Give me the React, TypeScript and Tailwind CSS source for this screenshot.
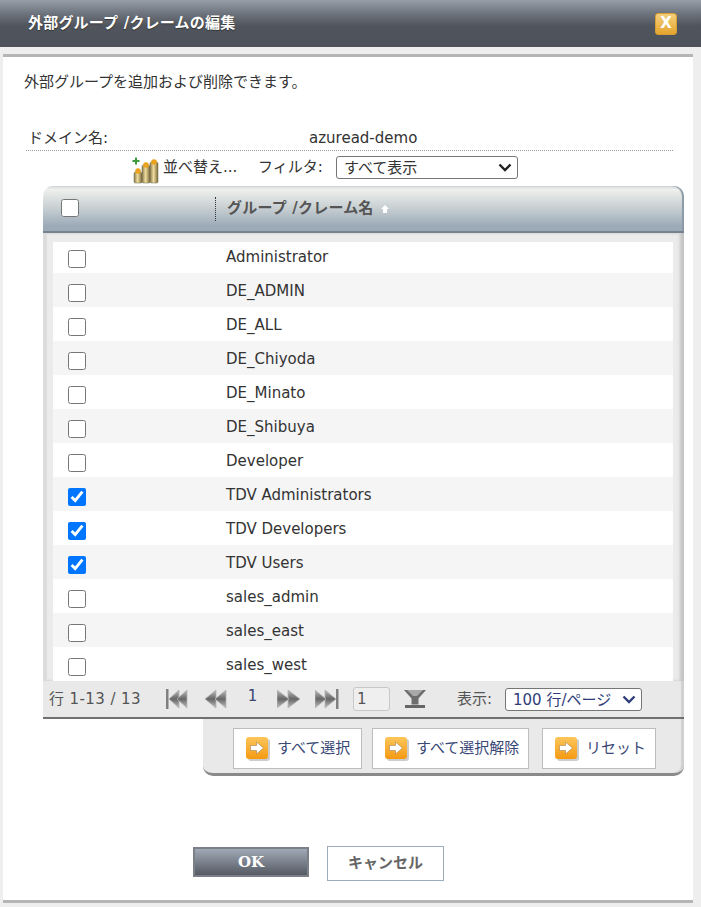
import React from 'react';

const FONT = "font-['DejaVu_Sans','Noto_Sans_CJK_JP',sans-serif]";

const rows = [
  { name: 'Administrator', on: false },
  { name: 'DE_ADMIN', on: false },
  { name: 'DE_ALL', on: false },
  { name: 'DE_Chiyoda', on: false },
  { name: 'DE_Minato', on: false },
  { name: 'DE_Shibuya', on: false },
  { name: 'Developer', on: false },
  { name: 'TDV Administrators', on: true },
  { name: 'TDV Developers', on: true },
  { name: 'TDV Users', on: true },
  { name: 'sales_admin', on: false },
  { name: 'sales_east', on: false },
  { name: 'sales_west', on: false },
];

const ArrowBadge = () => (
  <svg width="24" height="24" viewBox="0 0 24 24" className="shrink-0">
    <defs>
      <linearGradient id="ab" x1="0" y1="0" x2="0" y2="1">
        <stop offset="0" stopColor="#fcc65a" />
        <stop offset="1" stopColor="#f59a12" />
      </linearGradient>
    </defs>
    <rect x="2" y="2" width="22" height="22" rx="3" fill="#ccc" />
    <rect x="0" y="0" width="22" height="22" rx="3" fill="url(#ab)" />
    <path d="M4.5 8.5h6V5l7 6-7 6v-3.500h-6z" fill="#fff" stroke="#a8824a" strokeWidth="0.6" />
  </svg>
);

const PagerIcon = ({ d, bar }: { d: string[]; bar?: 'l' | 'r' }) => (
  <svg width="24" height="22" viewBox="0 0 24 22" className="shrink-0">
    <defs>
      <linearGradient id="pg" x1="0" y1="0" x2="0" y2="1">
        <stop offset="0" stopColor="#bcbcbc" />
        <stop offset="0.5" stopColor="#666" />
        <stop offset="1" stopColor="#c0c0c0" />
      </linearGradient>
    </defs>
    {d.map((p) => (
      <path key={p} d={p} fill="url(#pg)" stroke="#b4b4b4" strokeWidth="0.8" />
    ))}
    {bar === 'l' && <rect x="1" y="1" width="2.500" height="20" fill="#808080" />}
    {bar === 'r' && <rect x="21" y="1" width="2.500" height="20" fill="#808080" />}
  </svg>
);

const ActionButton = ({ label, width }: { label: string; width: string }) => (
  <button className={`${width} h-[41px] bg-white border border-[#bdbdbd] flex items-center pl-[12px] gap-[7px] text-[15px] text-[#3a4876] whitespace-nowrap`}>
    <ArrowBadge />
    <span>{label}</span>
  </button>
);

const Chevron = ({ color, className }: { color: string; className: string }) => (
  <svg width="14" height="9" viewBox="0 0 14 9" className={`absolute pointer-events-none ${className}`}>
    <path d="M1.500 1.500L7 7l5.500-5.500" fill="none" stroke={color} strokeWidth="2.400" />
  </svg>
);

export default function App() {
  return (
    <div className={`${FONT} w-[701px] h-[907px] bg-[#eeeeee] overflow-hidden flex flex-col text-[15px] text-[#333]`}>
      {/* title bar */}
      <div className="h-[47px] shrink-0 flex items-center justify-between pl-[28px] pr-[24px] bg-[linear-gradient(#969ea9_0%,#6c727b_30%,#50545d_55%,#4e525a_100%)]">
        <span className="text-white font-bold text-[15px] tracking-[0.2px] [text-shadow:0_1px_1px_#333]">外部グループ /クレームの編集</span>
        <span className="w-[22px] h-[22px] rounded-[3px] bg-[linear-gradient(#f3cf7c,#e5a52e)] border border-[#d99f35] flex items-center justify-center text-white font-bold text-[15px] leading-none">X</span>
      </div>

      {/* body */}
      <div className="mt-[7px] ml-[3px] w-[690px] h-[849px] bg-white border-t-[3px] border-b-[3px] border-[#b5b5b5] shrink-0 flex flex-col">
        <p className="mt-[15px] ml-[21px] h-[20px] leading-[20px] text-[15px] text-[#333]">外部グループを追加および削除できます。</p>

        <div className="mt-[35px] ml-[23px] w-[647px] h-[24px] pl-[2px] flex items-center border-b border-dotted border-[#999] text-[15px]">
          <span className="w-[281px]">ドメイン名:</span>
          <span>azuread-demo</span>
        </div>

        {/* sort and filter */}
        <div className="ml-[129px] h-[35px] pt-[5px] flex items-start">
          <svg width="27" height="28" viewBox="0 0 27 28" className="shrink-0">
            <defs>
              <linearGradient id="cy" x1="0" y1="0" x2="1" y2="0">
                <stop offset="0" stopColor="#8a7a4a" />
                <stop offset="0.45" stopColor="#f0dca0" />
                <stop offset="1" stopColor="#7c6a34" />
              </linearGradient>
            </defs>
            <path d="M3 1.500h2v2.500h2.500v2h-2.500v2.500h-2v-2.500h-2.500v-2h2.500z" fill="#3d9a3d" />
            <rect x="2" y="16" width="8" height="11" rx="1.500" fill="url(#cy)" stroke="#6a6a50" strokeWidth="0.5" />
            <rect x="10" y="9" width="8" height="18" rx="1.500" fill="url(#cy)" stroke="#6a6a50" strokeWidth="0.5" />
            <rect x="18" y="6" width="8" height="21" rx="1.500" fill="url(#cy)" stroke="#6a6a50" strokeWidth="0.5" />
            <circle cx="6" cy="15" r="2.800" fill="#eba21e" />
            <circle cx="14" cy="9" r="2.800" fill="#eba21e" />
            <circle cx="22" cy="6" r="2.800" fill="#eba21e" />
          </svg>
          <span className="ml-[4px] w-[95px]">並べ替え...</span>
          <span className="w-[78px]">フィルタ:</span>
          <div className="relative w-[182px] h-[23px]">
            <select className="appearance-none w-full h-full text-[15px] pl-[7px] bg-white border border-[#767676] rounded-[3px] text-[#333]">
              <option>すべて表示</option>
            </select>
            <Chevron color="#222" className="right-[6px] top-[7px]" />
          </div>
        </div>

        {/* grid */}
        <div className="ml-[40px] w-[641px]">
          <div className="h-[47px] rounded-t-[10px] border-b-[2px] border-[#76838f] bg-[linear-gradient(#d4dade_0%,#eef0ec_8%,#c6ced1_50%,#9dabb9_88%)] flex items-center shadow-[inset_-2px_0_1px_#8c99a6]">
            <input type="checkbox" readOnly className="ml-[18px] mb-[1px] w-[18px] h-[18px]" />
            <span className="ml-[136px] h-[24px] border-l border-dotted border-[#333]" />
            <span className="ml-[11px] font-bold text-[15px] tracking-[0.2px] text-[#555]">グループ /クレーム名</span>
            <svg width="10" height="10" viewBox="0 0 10 10" className="ml-[6px]">
              <path d="M5 1l4 4H7v4H3V5H1z" fill="#fff" />
            </svg>
          </div>

          <div className="bg-[#ebebeb] border-l-[4px] border-[#dcdcdc] pt-[9px] pl-[6px] pr-[11px] shadow-[inset_-4px_0_3px_#c4c4c4]">
            {rows.map((r, i) => (
              <div key={r.name} className={`flex items-start ${i === 0 ? 'h-[31px]' : 'h-[34px]'} ${i % 2 === 0 ? 'bg-white' : 'bg-[#f5f5f5]'}`}>
                <input type="checkbox" readOnly checked={r.on} className={`ml-[15px] w-[18px] h-[18px] shrink-0 ${i === 0 ? 'mt-[8px]' : 'mt-[11px]'}`} />
                <span className={`ml-[140px] text-[15px] leading-[20px] text-[#333] ${i === 0 ? 'mt-[5px]' : 'mt-[8px]'}`}>{r.name}</span>
              </div>
            ))}
          </div>

          {/* pager */}
          <div className="h-[38px] bg-[#e9e9e9] border-b-[2px] border-[#707070] flex items-center pl-[6px] text-[15px] text-[#555] shadow-[inset_-3px_0_1px_#d0d0d0]">
            <span className="w-[116px] whitespace-nowrap tracking-[0.4px]">行 1-13 / 13</span>
            <PagerIcon bar="l" d={['M4 11l10-9v18z', 'M12 11l10-9v18z']} />
            <span className="w-[15px]" />
            <PagerIcon d={['M1 11l11-9v18z', 'M11 11l11-9v18z']} />
            <span className="w-[49px] text-center text-[#3a4876] mb-[6px]">1</span>
            <PagerIcon d={['M23 11l-12-9v18z', 'M12 11l-12-9v18z']} />
            <span className="w-[14px]" />
            <PagerIcon bar="r" d={['M21 11l-11-9v18z', 'M11 11l-11-9v18z']} />
            <input readOnly value="1" className="ml-[14px] w-[37px] h-[24px] border border-[#c8c8c8] rounded-[3px] bg-[#efefef] pl-[3px] text-[15px] text-[#555]" />
            <svg width="22" height="20" viewBox="0 0 22 20" className="ml-[14px] shrink-0">
              <path d="M0 1h22l-7.500 8.500v6h-7v-6z" fill="#6d6d6d" />
              <path d="M3 1h16l-6 6h-4z" fill="#a8a8a8" />
              <rect x="1" y="16" width="20" height="3" fill="#666" />
            </svg>
            <span className="ml-[31px] w-[48px]">表示:</span>
            <div className="relative w-[137px] h-[23px]">
              <select className="appearance-none w-full h-full text-[15px] pl-[7px] bg-white border border-[#767676] rounded-[3px] text-[#2f3d7a]">
                <option>100 行/ページ</option>
              </select>
              <Chevron color="#2f3d7a" className="right-[6px] top-[7px]" />
            </div>
          </div>
        </div>

        {/* action buttons */}
        <div className="ml-[200px] w-[481px] h-[57px] shrink-0 bg-[#e9e9e9] rounded-b-[10px] border-b-[3px] border-[#8a8a8a] flex items-start pt-[9px] pl-[30px] shadow-[inset_-3px_0_1px_#d0d0d0]">
          <ActionButton label="すべて選択" width="w-[129px]" />
          <span className="w-[10px]" />
          <ActionButton label="すべて選択解除" width="w-[157px]" />
          <span className="w-[13px]" />
          <ActionButton label="リセット" width="w-[114px]" />
        </div>

        {/* OK / cancel */}
        <div className="mt-[70px] ml-[190px] flex items-start">
          <button className="mt-[1px] w-[116px] h-[30px] border-[2px] border-[#7b8088] bg-[linear-gradient(#a0a9b6,#555a63)] text-white font-bold text-[15px] font-['DejaVu_Serif','Noto_Sans_CJK_JP',serif]">OK</button>
          <button className="ml-[18px] w-[117px] h-[35px] border border-[#9bacbd] bg-white font-bold text-[15px] text-[#666]">キャンセル</button>
        </div>
      </div>
    </div>
  );
}
